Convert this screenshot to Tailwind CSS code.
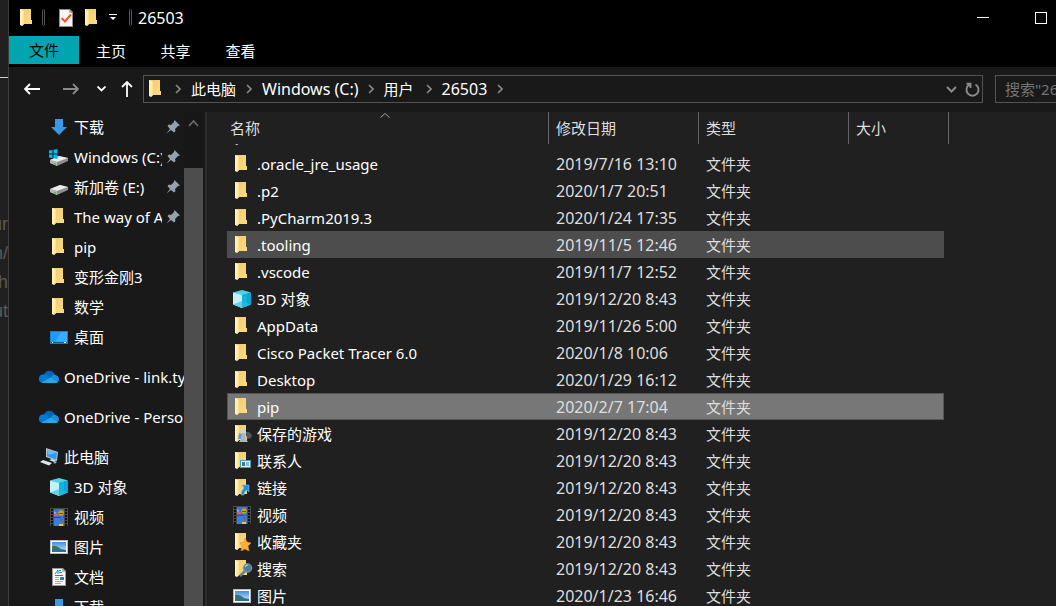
<!DOCTYPE html>
<html lang="zh-CN">
<head>
<meta charset="utf-8">
<title>26503</title>
<script src="https://cdn.jsdelivr.net/npm/@tailwindcss/browser@4"></script>
</head>
<body class="flex h-screen overflow-hidden bg-[#202020] font-['Noto_Sans','Noto_Sans_CJK_SC',sans-serif] text-[15px] leading-5 text-white">

<!-- Shared icons -->
<svg class="absolute size-0" aria-hidden="true">
  <defs>
    <linearGradient id="gold" x1="0" x2="1" y1="0" y2="1"><stop offset="0" stop-color="#f1cb70"/><stop offset="1" stop-color="#fbdc82"/></linearGradient>
    <linearGradient id="sky" x1="0" x2="0" y1="0" y2="1"><stop offset="0" stop-color="#3f8fe0"/><stop offset="1" stop-color="#cfe9fa"/></linearGradient>
    <symbol id="folder" viewBox="0 0 18 18"><path d="M3 0h10v11h1v4H5z" fill="url(#gold)"/><path d="M2 0h1l3 2v13l-2 2-2-1z" fill="#fff0b4"/><path d="M5 2l1 1v12l-2 2z" fill="#ffe28c"/></symbol>
    <symbol id="down" viewBox="0 0 18 18"><path d="M5 1h8v8h4l-8 8-8-8h4z" fill="#3b97e8"/></symbol>
    <symbol id="disk" viewBox="0 0 18 18"><path d="M0 11l10-4 8 2v3L7 17l-7-3z" fill="#8d8d8d"/><path d="M0 11l10-4 8 2-11 4z" fill="#ececec"/><path d="M0 11l7 2v4l-7-3z" fill="#b5b5b5"/><path d="M4 14l2 .8v1L4 15z" fill="#2eb82e"/></symbol>
    <symbol id="windisk" viewBox="0 0 19 18"><path d="M1 12l9-4 9 2v3L8 18l-7-3z" fill="#8d8d8d"/><path d="M1 12l9-4 9 2-11 4z" fill="#ececec"/><path d="M1 12l7 2v4l-7-3z" fill="#b5b5b5"/><path d="M5 15l2 .8v1L5 16z" fill="#2eb82e"/><path d="M0 2.500L3.500 2v3.500H0zM4.500 1.800L8.500 1v4.500h-4zM0 6.500h3.500V10L0 9.500zM4.500 6.500h4V11l-4-.7z" fill="#00bcf2"/></symbol>
    <symbol id="desktop" viewBox="0 0 18 18"><path d="M0 3h18v13H0z" fill="#0a84d8"/><path d="M1 4h16v10H1z" fill="#1e9bff"/><path d="M11 4h6v10H5z" fill="#3caaff"/><path d="M1 14h16v1H1z" fill="#075a9c"/><path d="M2 14h1v1H2zM14 14h2v1h-2z" fill="#fff"/></symbol>
    <symbol id="cloud" viewBox="0 0 20 14"><path d="M5 5C6 1.500 9 0 12 1c2 .5 3 2 4 4l-3 4-6-2z" fill="#0364b8"/><path d="M4 13a4 4 0 010-8.500c2-.5 4 0 5 1L14 9l-9 4z" fill="#0078d4"/><path d="M12 7c1-2 3-2.500 4.500-2C19 5.500 20 7.500 20 9c0 2-1 4-3.500 4z" fill="#1490df"/><path d="M2.500 12.500L12 7.500l6.500 4.500c-.5.700-1.200 1-2 1H4z" fill="#28a8ea"/></symbol>
    <symbol id="pc" viewBox="0 0 20 18"><path d="M6 0l12 4-1 9L6 9z" fill="#bfc7cd"/><path d="M7 1.500l10 3.300-.7 7L7 8.300z" fill="#2b9df4"/><path d="M7 1.500l10 3.300-9 2z" fill="#65bcfa"/><path d="M9 12l3-1 5 2-3 1z" fill="#d9dde0"/><path d="M0 14l3-2 9 3-3 2.500z" fill="#dfe4e8"/><path d="M13 15l2-1 2 .6-2 1z" fill="#c5cbd0"/></symbol>
    <symbol id="cube" viewBox="0 0 18 18"><path d="M9 0l9 2.500L9 6 0 2.500z" fill="#4fd3e6"/><path d="M0 2.500L9 5v13l-9-3.500z" fill="#c3f1f5"/><path d="M9 5l9-2.500v12L9 18z" fill="#0aa5d8"/><path d="M9 5l5-1.400V16L9 18z" fill="#12b5da"/><path d="M0 14.500L9 11v7z" fill="#64d2e4"/><path d="M9 11l9 3.500L9 18z" fill="#22b8de"/></symbol>
    <symbol id="film" viewBox="0 0 18 18"><path d="M0 0h18v18H0z" fill="#4a4a4a"/><path d="M4 1h10v8H4z" fill="#3b6fd0"/><path d="M4 10h10v8H4z" fill="#4279dc"/><circle cx="11" cy="5" r="2.800" fill="#c9a21c"/><path d="M9 5h4v1H9z" fill="#237a2c"/><path d="M4 6h4v2H4z" fill="#e8508a"/><path d="M4 3l3 2-3 1z" fill="#79b8f0"/><path d="M10 11h3l-1.500 3z" fill="#d4322a"/><path d="M9 16h4v2H9z" fill="#f2cc22"/><path d="M11 9h2v1h-2z" fill="#2a9a3a"/><path d="M2 1v17M16 1v17" stroke="#111" stroke-width="2" stroke-dasharray="2 1"/></symbol>
    <symbol id="picture" viewBox="0 0 18 18"><path d="M0 2h18v14H0z" fill="#b9bcbf"/><path d="M1 3h16v12H1z" fill="#fff"/><path d="M2 4h14v10H2z" fill="url(#sky)"/><path d="M2 8c4-1 6 1 9 3l5 1v1H2z" fill="#3c7560"/><path d="M2 12h14v2H2z" fill="#286fa8"/></symbol>
    <symbol id="doc" viewBox="0 0 18 18"><path d="M2 0h11l3 3v15H2z" fill="#9a9a9a"/><path d="M3 1h9v3h3v13H3z" fill="#fafafa"/><path d="M12 1l3 3h-3z" fill="#c4c4c4"/><path d="M5 6l3-4v4M9 2.500h2M9 4.500h3M5 7.500h8" stroke="#1b86cf" fill="none"/><path d="M5 9.500h4M5 11.500h4M5 13.500h8M5 15.500h6" stroke="#aaa"/><path d="M10 9h4v3h-4z" fill="#2585bf"/><path d="M10 11l4 .5v.5h-4z" fill="#3f7b4d"/></symbol>
    <symbol id="games" viewBox="0 0 20 18"><use href="#folder" width="18" height="18"/><path d="M13 7h3l3 3-1 3-4 1z" fill="#505a62"/><circle cx="10.500" cy="6" r="2.500" fill="#c9d3da"/><path d="M9 8h3l1 6 2 3H6l2-3z" fill="#aab7c0"/><path d="M6 8l3 1-1 5H5z" fill="#5da0d4"/></symbol>
    <symbol id="contacts" viewBox="0 0 20 18"><use href="#folder" width="18" height="18"/><path d="M7 8h11v8H7z" fill="#4a9cc7"/><path d="M8 9h9v6H8z" fill="#dff3fb"/><path d="M9 10h3v4H9z" fill="#367b8f"/><path d="M13 11h3M13 13h3" stroke="#3b7fb0"/></symbol>
    <symbol id="link" viewBox="0 0 20 18"><use href="#folder" width="18" height="18"/><path d="M9 6h7v7l-2-2c-2 1-3 3-3 5H8c0-3 1-5 3-7z" fill="#268ee0" stroke="#8cc8f4" stroke-width=".5"/></symbol>
    <symbol id="star" viewBox="0 0 20 18"><use href="#folder" width="18" height="18"/><path d="M12 5l2 4 4 1-3 3 1 5-4-2-4 2 1-5-2-3 4-1z" fill="#fdb13a" stroke="#e98b1e" stroke-width=".6"/></symbol>
    <symbol id="find" viewBox="0 0 20 18"><use href="#folder" width="18" height="18"/><path d="M12 11l-5 5" stroke="#6f7f8a" stroke-width="2.500"/><circle cx="14.500" cy="8" r="4.300" fill="#4f7f9c" stroke="#8d9aa3"/><path d="M12 7a3 3 0 013-2" stroke="#c2e2f4" fill="none"/></symbol>
    <symbol id="pin" viewBox="0 0 14 14"><path d="M8.500 0L14 5.500l-2 .5-3 3 .5 2L8 12.500 5 10l-4.500 3.500L4 9 1.500 6 3 4.500l2 .5 3-3z" fill="#96a2ab"/></symbol>
    <symbol id="chev" viewBox="0 0 6 10"><path d="M1 1l4 4-4 4" fill="none" stroke="#8a8a8a" stroke-width="1.600"/></symbol>
  </defs>
</svg>

<!-- Edge of the window underneath -->
<div class="flex w-[9px] shrink-0 flex-col items-end overflow-hidden border-r border-[#3c3c3c] text-[18px] leading-[29px] text-[#5a5a5a] font-['Liberation_Sans',sans-serif]" aria-hidden="true">
  <div class="mb-[132px] mt-[77px] h-px w-full shrink-0 bg-[#d0d0d0]"></div>
  <span>ur</span><span>n/</span><span>h</span><span>ut</span>
</div>

<div class="flex min-w-0 flex-1 flex-col">
  <!-- Title bar -->
  <header class="flex h-9 shrink-0 items-center bg-black pb-px pl-[9px] pr-[9px]">
    <svg class="size-[18px]"><use href="#folder"/></svg>
    <i class="ml-[6px] h-[17px] w-[3px] rounded-sm border border-[#555]"></i>
    <button class="ml-[12px]" aria-label="属性"><svg class="block size-[18px]" viewBox="0 0 18 18"><path d="M2 0h11l3 3v15H2z" fill="#8c8c8c"/><path d="M3 1h9v3h3v13H3z" fill="#f5f5f5"/><path d="M12 1l3 3h-3z" fill="#bbb"/><path d="M4.500 9l3.500 3.500 6-7" fill="none" stroke="#f0561d" stroke-width="2"/></svg></button>
    <button class="ml-[8px]" aria-label="新建文件夹"><svg class="block size-[18px]"><use href="#folder"/></svg></button>
    <button class="ml-[8px]" aria-label="自定义快速访问工具栏"><svg class="block h-[7px] w-[8px]" viewBox="0 0 8 7"><path d="M0 0h8v1H0zM1 3h6L4 6z" fill="#fff"/></svg></button>
    <i class="ml-[12px] h-[17px] w-[3px] rounded-sm border border-[#555]"></i>
    <h1 class="ml-[6px] text-base leading-5">26503</h1>
    <button class="ml-auto" aria-label="最小化"><svg class="block size-3" viewBox="0 0 12 12"><path d="M0 5h12v1H0z" fill="#fff"/></svg></button>
    <button class="ml-[46px] size-3 border border-white" aria-label="最大化"></button>
  </header>

  <!-- Ribbon tabs -->
  <nav class="flex h-[31px] shrink-0 bg-black">
    <button class="h-7 w-[70px] bg-[#00a5af] text-black">文件</button>
    <button class="h-[30px] w-[64px]">主页</button>
    <button class="h-[30px] w-[65px]">共享</button>
    <button class="h-[30px] w-[65px]">查看</button>
  </nav>

  <!-- Navigation row -->
  <div class="flex h-[45px] shrink-0 items-center bg-[#191919] pb-px pl-[15px]">
    <button aria-label="后退"><svg class="block h-3 w-4" viewBox="0 0 16 12"><path d="M16 6H1M6 1L1 6l5 5" fill="none" stroke="#fff" stroke-width="1.800"/></svg></button>
    <button class="ml-[23px]" aria-label="前进"><svg class="block h-3 w-4" viewBox="0 0 16 12"><path d="M0 6h15M10 1l5 5-5 5" fill="none" stroke="#8a8a8a" stroke-width="1.800"/></svg></button>
    <button class="ml-[18px]" aria-label="最近"><svg class="block h-[6px] w-[9px]" viewBox="0 0 9 6"><path d="M.5.500l4 4 4-4" fill="none" stroke="#fff" stroke-width="1.800"/></svg></button>
    <button class="ml-[15px]" aria-label="向上"><svg class="block h-4 w-3" viewBox="0 0 12 16"><path d="M6 16V1M1 6l5-5 5 5" fill="none" stroke="#fff" stroke-width="1.800"/></svg></button>
    <div class="ml-[10px] flex h-7 min-w-0 flex-1 items-center border border-[#535353] pl-[3px] pr-[2px] text-base leading-5">
      <svg class="size-[18px]"><use href="#folder"/></svg>
      <svg class="ml-[10px] h-[10px] w-[6px]"><use href="#chev"/></svg>
      <button class="ml-[10px] text-[15px]">此电脑</button>
      <svg class="ml-[10px] h-[10px] w-[6px]"><use href="#chev"/></svg>
      <button class="ml-[10px]">Windows (C:)</button>
      <svg class="ml-[9px] h-[10px] w-[6px]"><use href="#chev"/></svg>
      <button class="ml-[10px] text-[15px]">用户</button>
      <svg class="ml-[12px] h-[10px] w-[6px]"><use href="#chev"/></svg>
      <button class="ml-[10px]">26503</button>
      <svg class="ml-[10px] h-[10px] w-[6px]"><use href="#chev"/></svg>
      <button class="ml-auto" aria-label="以前的位置"><svg class="block h-[7px] w-[11px]" viewBox="0 0 11 7"><path d="M1 1l4.500 4.500L10 1" fill="none" stroke="#8a8a8a" stroke-width="2"/></svg></button>
      <button class="ml-[8px]" aria-label="刷新"><svg class="block size-[15px]" viewBox="0 0 15 15"><path d="M10.500 2.500A6 6 0 114.500 2.500M1.500 1.800H5.500V6" fill="none" stroke="#8a8a8a" stroke-width="1.900"/></svg></button>
    </div>
    <input type="text" aria-label="搜索" placeholder='搜索"26503"' class="ml-3 h-7 w-[61px] shrink-0 border border-r-0 border-[#535353] bg-transparent pl-[9px] placeholder:text-[#747474]">
  </div>

  <div class="flex min-h-0 flex-1">
    <!-- Navigation pane -->
    <aside class="flex w-[198px] shrink-0 overflow-hidden border-r-2 border-[#2c2c2c] bg-[#191919]">
      <ul class="min-w-0 flex-1 whitespace-nowrap [&_a]:flex [&_a]:h-[30px] [&_a]:items-center [&_svg]:shrink-0 [&_span]:flex-1 [&_span]:overflow-hidden">
        <li><a href="#" class="gap-[6px] pl-[41px] pr-[4px]"><svg class="size-[18px]"><use href="#down"/></svg><span>下载</span><svg class="size-[14px]"><use href="#pin"/></svg></a></li>
        <li><a href="#" class="gap-[6px] pl-[40px] pr-[4px]"><svg class="h-[18px] w-[19px]"><use href="#windisk"/></svg><span class="-mr-[2px]">Windows (C:)</span><svg class="size-[14px]"><use href="#pin"/></svg></a></li>
        <li><a href="#" class="gap-[6px] pl-[41px] pr-[4px]"><svg class="size-[18px]"><use href="#disk"/></svg><span>新加卷 (E:)</span><svg class="size-[14px]"><use href="#pin"/></svg></a></li>
        <li><a href="#" class="gap-[6px] pl-[41px] pr-[4px]"><svg class="size-[18px]"><use href="#folder"/></svg><span class="-mr-[2px]">The way of A</span><svg class="size-[14px]"><use href="#pin"/></svg></a></li>
        <li><a href="#" class="gap-[6px] pl-[41px]"><svg class="size-[18px]"><use href="#folder"/></svg><span>pip</span></a></li>
        <li><a href="#" class="gap-[6px] pl-[41px]"><svg class="size-[18px]"><use href="#folder"/></svg><span>变形金刚3</span></a></li>
        <li><a href="#" class="gap-[6px] pl-[41px]"><svg class="size-[18px]"><use href="#folder"/></svg><span>数学</span></a></li>
        <li><a href="#" class="gap-[6px] pl-[41px]"><svg class="size-[18px]"><use href="#desktop"/></svg><span>桌面</span></a></li>
        <li class="mt-[10px]"><a href="#" class="gap-[5px] pl-[30px]"><svg class="h-[14px] w-5"><use href="#cloud"/></svg><span>OneDrive - link.type</span></a></li>
        <li class="mt-[10px]"><a href="#" class="gap-[5px] pl-[30px]"><svg class="h-[14px] w-5"><use href="#cloud"/></svg><span>OneDrive - Personal</span></a></li>
        <li class="mt-[10px]"><a href="#" class="gap-[4px] pl-[31px]"><svg class="h-[18px] w-5"><use href="#pc"/></svg><span>此电脑</span></a></li>
        <li><a href="#" class="gap-[6px] pl-[41px]"><svg class="size-[18px]"><use href="#cube"/></svg><span>3D 对象</span></a></li>
        <li><a href="#" class="gap-[6px] pl-[41px]"><svg class="size-[18px]"><use href="#film"/></svg><span>视频</span></a></li>
        <li><a href="#" class="gap-[6px] pl-[41px]"><svg class="size-[18px]"><use href="#picture"/></svg><span>图片</span></a></li>
        <li><a href="#" class="gap-[6px] pl-[41px]"><svg class="size-[18px]"><use href="#doc"/></svg><span>文档</span></a></li>
        <li><a href="#" class="gap-[6px] pl-[41px]"><svg class="size-[18px]"><use href="#down"/></svg><span>下载</span></a></li>
      </ul>
      <div class="mr-[2px] flex w-[19px] shrink-0 flex-col bg-[#171717]">
        <button class="mb-[41px] flex h-[15px] items-end justify-center" aria-label="向上滚动"><svg class="h-[8px] w-[11px]" viewBox="0 0 11 8"><path d="M1 7l4.500-5L10 7" fill="none" stroke="#6f6f6f" stroke-width="1.600"/></svg></button>
        <div class="flex-1 bg-[#4d4d4d]"></div>
      </div>
    </aside>

    <!-- File list -->
    <main class="min-w-0 flex-1 overflow-hidden pl-5">
      <table class="block w-[722px] whitespace-nowrap">
        <thead class="relative z-10 block bg-[#202020] text-[#dedede]">
          <tr class="flex h-8 [&>th]:border-r [&>th]:border-[#636363] [&>th]:text-left [&>th]:font-normal">
            <th class="relative w-[322px] pl-[3px]"><button class="h-8">名称</button><svg class="absolute right-[158px] top-px h-[5px] w-[10px]" viewBox="0 0 10 5"><path d="M.5 4.500L5 .5l4.500 4" fill="none" stroke="#a0a0a0"/></svg></th>
            <th class="w-[150px] pl-[7px]"><button class="h-8">修改日期</button></th>
            <th class="w-[150px] pl-[7px]"><button class="h-8">类型</button></th>
            <th class="w-[100px] pl-[7px]"><button class="h-8">大小</button></th>
          </tr>
        </thead>
        <tbody class="-mt-[21px] mr-[5px] block text-[#dedede] [&>tr]:flex [&>tr]:h-[27px] [&>tr]:items-center [&_td:nth-child(1)]:flex [&_td:nth-child(1)]:w-[329px] [&_td:nth-child(1)]:items-center [&_td:nth-child(1)]:gap-[4px] [&_td:nth-child(1)]:pl-[6px] [&_td:nth-child(1)]:text-white [&_td:nth-child(2)]:w-[150px] [&_td:nth-child(2)]:text-base [&_td:nth-child(2)]:leading-5 [&_svg]:h-[18px] [&_svg]:w-5">
          <tr><td><svg viewBox="0 0 20 18"><use href="#folder" width="18" height="18"/></svg></td><td></td><td></td></tr>
          <tr><td><svg viewBox="0 0 20 18"><use href="#folder" width="18" height="18"/></svg>.oracle_jre_usage</td><td>2019/7/16 13:10</td><td>文件夹</td></tr>
          <tr><td><svg viewBox="0 0 20 18"><use href="#folder" width="18" height="18"/></svg>.p2</td><td>2020/1/7 20:51</td><td>文件夹</td></tr>
          <tr><td><svg viewBox="0 0 20 18"><use href="#folder" width="18" height="18"/></svg>.PyCharm2019.3</td><td>2020/1/24 17:35</td><td>文件夹</td></tr>
          <tr class="bg-[#4d4d4d]"><td><svg viewBox="0 0 20 18"><use href="#folder" width="18" height="18"/></svg>.tooling</td><td>2019/11/5 12:46</td><td>文件夹</td></tr>
          <tr><td><svg viewBox="0 0 20 18"><use href="#folder" width="18" height="18"/></svg>.vscode</td><td>2019/11/7 12:52</td><td>文件夹</td></tr>
          <tr><td><svg viewBox="0 0 20 18"><use href="#cube" width="18" height="18"/></svg>3D 对象</td><td>2019/12/20 8:43</td><td>文件夹</td></tr>
          <tr><td><svg viewBox="0 0 20 18"><use href="#folder" width="18" height="18"/></svg>AppData</td><td>2019/11/26 5:00</td><td>文件夹</td></tr>
          <tr><td><svg viewBox="0 0 20 18"><use href="#folder" width="18" height="18"/></svg>Cisco Packet Tracer 6.0</td><td>2020/1/8 10:06</td><td>文件夹</td></tr>
          <tr><td><svg viewBox="0 0 20 18"><use href="#folder" width="18" height="18"/></svg>Desktop</td><td>2020/1/29 16:12</td><td>文件夹</td></tr>
          <tr class="bg-[#777] outline -outline-offset-1 outline-[#555]"><td><svg viewBox="0 0 20 18"><use href="#folder" width="18" height="18"/></svg>pip</td><td>2020/2/7 17:04</td><td>文件夹</td></tr>
          <tr><td><svg><use href="#games"/></svg>保存的游戏</td><td>2019/12/20 8:43</td><td>文件夹</td></tr>
          <tr><td><svg><use href="#contacts"/></svg>联系人</td><td>2019/12/20 8:43</td><td>文件夹</td></tr>
          <tr><td><svg><use href="#link"/></svg>链接</td><td>2019/12/20 8:43</td><td>文件夹</td></tr>
          <tr><td><svg viewBox="0 0 20 18"><use href="#film" width="18" height="18"/></svg>视频</td><td>2019/12/20 8:43</td><td>文件夹</td></tr>
          <tr><td><svg><use href="#star"/></svg>收藏夹</td><td>2019/12/20 8:43</td><td>文件夹</td></tr>
          <tr><td><svg><use href="#find"/></svg>搜索</td><td>2019/12/20 8:43</td><td>文件夹</td></tr>
          <tr><td><svg viewBox="0 0 20 18"><use href="#picture" width="18" height="18"/></svg>图片</td><td>2020/1/23 16:46</td><td>文件夹</td></tr>
        </tbody>
      </table>
    </main>
  </div>
</div>
</body>
</html>
